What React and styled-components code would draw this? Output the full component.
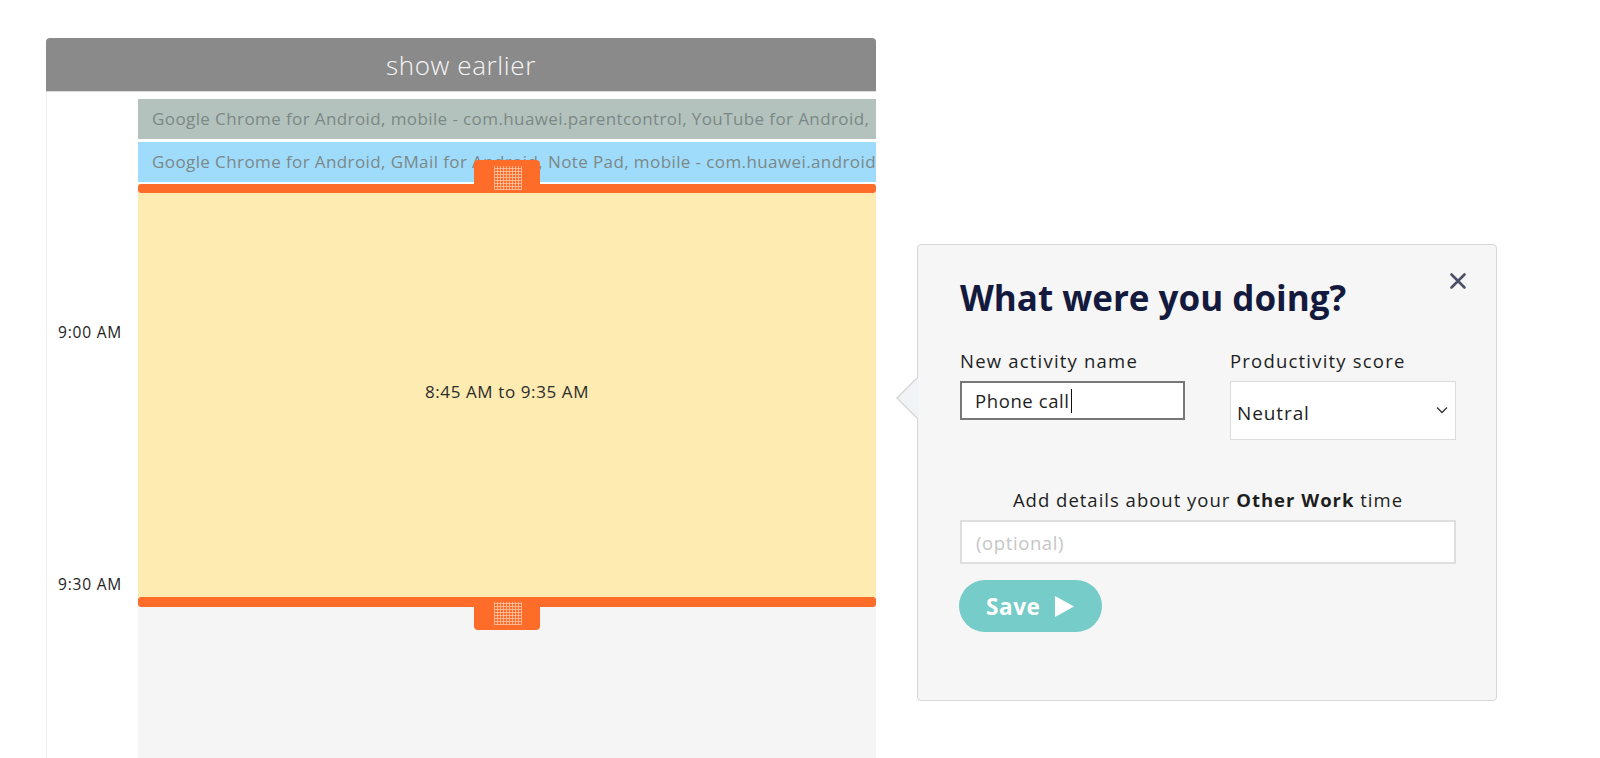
import styled, { createGlobalStyle } from "styled-components";

const GlobalStyle = createGlobalStyle`
    html, body {
        margin: 0;
        padding: 0;
        background: #ffffff;
        font-family: "Open Sans", "Lato", sans-serif;
        overflow: hidden;
    }
`;

const Page = styled.div`
    display: flex;
    align-items: flex-start;
    height: 758px;
`;

const Calendar = styled.section`
    margin: 38px 0 0 46px;
    width: 830px;
    flex: none;
    height: 720px;
    display: flex;
    flex-direction: column;
`;

const ShowEarlier = styled.button`
    height: 54px;
    flex: none;
    border: none;
    border-bottom: 1px solid #dcdcdc;
    border-radius: 4px 4px 0 0;
    background: #8a8a8a;
    color: #f6f6f6;
    font-family: inherit;
    font-size: 26px;
    font-weight: 300;
    letter-spacing: 0.6px;
    cursor: pointer;
`;

const Body = styled.div`
    flex: 1;
    display: grid;
    grid-template-columns: 91px minmax(0, 1fr);
    border-left: 1px solid #efefef;
    min-height: 0;
`;

const TimeCol = styled.div`
    display: flex;
    flex-direction: column;
    gap: 232px;
    padding: 230px 0 0 11px;
`;

const TimeLabel = styled.div`
    height: 20px;
    line-height: 20px;
    font-size: 15.5px;
    letter-spacing: 0.8px;
    color: #222222;
    white-space: nowrap;
`;

const EventCol = styled.div`
    display: flex;
    flex-direction: column;
    min-width: 0;
    padding-top: 7px;
`;

const AppRow = styled.div`
    height: 40px;
    flex: none;
    margin-bottom: ${({ $gap }) => $gap}px;
    padding-left: 14px;
    background: ${({ $bg }) => $bg};
    color: #7c8886;
    font-size: 17px;
    letter-spacing: 0.4px;
    line-height: 40px;
    white-space: nowrap;
    overflow: hidden;
`;

const Bar = styled.div`
    position: relative;
    flex: none;
    height: ${({ $h }) => $h}px;
    background: #fd6c28;
    border-radius: 3px;
    z-index: 2;
`;

const Handle = styled.div`
    position: absolute;
    left: 336px;
    width: 66px;
    height: 33px;
    background: #fd6c28;
    ${({ $top }) => $top
		? "bottom: 0; border-radius: 4px 4px 0 0;"
		: "top: 0; border-radius: 0 0 4px 4px;"}
`;

const Grip = styled.div`
    position: absolute;
    left: 20px;
    width: 28px;
    top: ${({ $top }) => ($top ? 6 : 5)}px;
    bottom: ${({ $top }) => ($top ? 3 : 5)}px;
    background-image:
        repeating-linear-gradient(90deg, rgba(255, 200, 170, 0.75) 0 1px, transparent 1px 3px),
        repeating-linear-gradient(0deg, rgba(255, 200, 170, 0.75) 0 1px, transparent 1px 3px);
`;

const Selection = styled.div`
    height: 404px;
    flex: none;
    box-sizing: border-box;
    padding-bottom: 8px;
    background: #feebb1;
    display: flex;
    align-items: center;
    justify-content: center;
    color: #2b2b2b;
    font-size: 17px;
    letter-spacing: 0.6px;
`;

const Rest = styled.div`
    flex: 1;
    background: #f5f5f5;
`;

const Popover = styled.section`
    position: relative;
    margin: 244px 0 0 41px;
    width: 580px;
    height: 457px;
    flex: none;
    box-sizing: border-box;
    padding: 30px 40px 0 42px;
    background: #f6f6f6;
    border: 1px solid #d6d6d6;
    border-radius: 4px;
    color: #1e1e1e;

    &::before,
    &::after {
        content: "";
        position: absolute;
        width: 0;
        height: 0;
        border-style: solid;
        border-color: transparent;
    }

    &::before {
        left: -22px;
        top: 131px;
        border-width: 22px 22px 22px 0;
        border-right-color: #d6d6d6;
    }

    &::after {
        left: -20px;
        top: 132px;
        border-width: 21px 21px 21px 0;
        border-right-color: #f1f3f6;
    }
`;

const Close = styled.button`
    position: absolute;
    top: 26px;
    right: 28px;
    width: 20px;
    height: 20px;
    padding: 0;
    border: none;
    background: none;
    color: #4b4f67;
    cursor: pointer;
`;

const Title = styled.h2`
    margin: 0;
    font-size: 35px;
    font-weight: 700;
    line-height: 45px;
    color: #141a3d;
`;

const Fields = styled.div`
    display: grid;
    grid-template-columns: 225px 226px;
    column-gap: 45px;
    margin-top: 29px;
    align-items: start;
`;

const Field = styled.label`
    display: flex;
    flex-direction: column;
    gap: 8px;
`;

const LabelText = styled.span`
    font-size: 18.5px;
    letter-spacing: 1.2px;
    line-height: 24px;
    color: #1e1e1e;
    white-space: nowrap;
`;

const TextBox = styled.div`
    height: 39px;
    box-sizing: border-box;
    display: flex;
    align-items: center;
    padding-left: 13px;
    background: #ffffff;
    border: 2px solid #777777;
    font-size: 18.5px;
    letter-spacing: 0.6px;
    color: #1e1e1e;
`;

const Caret = styled.span`
    display: inline-block;
    width: 1px;
    height: 24px;
    margin-left: 1px;
    background: #111111;
`;

const SelectWrap = styled.div`
    position: relative;
    height: 59px;
`;

const Select = styled.select`
    width: 100%;
    height: 100%;
    box-sizing: border-box;
    padding: 4px 0 0 6px;
    appearance: none;
    background: #ffffff;
    border: 1px solid #dcdcdc;
    border-radius: 0;
    font-family: inherit;
    font-size: 19px;
    letter-spacing: 0.9px;
    color: #1e1e1e;
`;

const Chevron = styled.svg`
    position: absolute;
    right: 8px;
    top: 25px;
    pointer-events: none;
`;

const DetailsLabel = styled.p`
    margin: 48px 0 0;
    text-align: center;
    font-size: 18.5px;
    letter-spacing: 1px;
    line-height: 24px;
    color: #1e1e1e;
`;

const Details = styled.input`
    display: block;
    width: 100%;
    height: 44px;
    box-sizing: border-box;
    margin-top: 8px;
    padding: 0 14px;
    background: #ffffff;
    border: 2px solid #dedede;
    font-family: inherit;
    font-size: 18.5px;
    letter-spacing: 0.6px;
    color: #1e1e1e;

    &::placeholder {
        color: #c6c6c6;
    }
`;

const SaveButton = styled.button`
    display: flex;
    align-items: center;
    gap: 15px;
    margin: 16px 0 0 -1px;
    width: 143px;
    height: 52px;
    padding: 0 0 0 27px;
    border: none;
    border-radius: 26px;
    background: #76ccc8;
    color: #ffffff;
    font-family: inherit;
    font-size: 22.5px;
    font-weight: 700;
    letter-spacing: 0.6px;
    cursor: pointer;
`;

const apps = [
	{ bg: "#b3c2bd", gap: 3, text: "Google Chrome for Android, mobile - com.huawei.parentcontrol, YouTube for Android," },
	{ bg: "#9fdcfc", gap: 2, text: "Google Chrome for Android, GMail for Android, Note Pad, mobile - com.huawei.android" },
];

const App = () => {
	return (
		<Page>
			<GlobalStyle/>
			<Calendar>
				<ShowEarlier>show earlier</ShowEarlier>
				<Body>
					<TimeCol>
						<TimeLabel>9:00 AM</TimeLabel>
						<TimeLabel>9:30 AM</TimeLabel>
					</TimeCol>
					<EventCol>
						{apps.map((app) => (
							<AppRow key={app.text} $bg={app.bg} $gap={app.gap}>
								{app.text}
							</AppRow>
						))}
						<Bar $h={9}>
							<Handle $top>
								<Grip $top/>
							</Handle>
						</Bar>
						<Selection>8:45 AM to 9:35 AM</Selection>
						<Bar $h={10}>
							<Handle>
								<Grip/>
							</Handle>
						</Bar>
						<Rest/>
					</EventCol>
				</Body>
			</Calendar>

			<Popover>
				<Close aria-label="close">
					<svg width="20" height="20" viewBox="0 0 20 20">
						<path d="M3.5 3.5 L16.5 16.5 M16.5 3.5 L3.5 16.5" stroke="currentColor" strokeWidth="2.6" strokeLinecap="round"/>
					</svg>
				</Close>
				<Title>What were you doing?</Title>
				<Fields>
					<Field>
						<LabelText>New activity name</LabelText>
						<TextBox>
							Phone call<Caret/>
						</TextBox>
					</Field>
					<Field>
						<LabelText>Productivity score</LabelText>
						<SelectWrap>
							<Select defaultValue="neutral">
								<option value="productive">Productive</option>
								<option value="neutral">Neutral</option>
								<option value="distracting">Distracting</option>
							</Select>
							<Chevron width="12" height="8" viewBox="0 0 12 8">
								<path d="M1 1.5 L6 6.5 L11 1.5" fill="none" stroke="#333" strokeWidth="1.3"/>
							</Chevron>
						</SelectWrap>
					</Field>
				</Fields>
				<DetailsLabel>
					Add details about your <b>Other Work</b> time
				</DetailsLabel>
				<Details placeholder="(optional)"/>
				<SaveButton>
					Save
					<svg width="19" height="21" viewBox="0 0 19 21">
						<path d="M0 0 L19 10.5 L0 21 Z" fill="#ffffff"/>
					</svg>
				</SaveButton>
			</Popover>
		</Page>
	);
};

export default App;
